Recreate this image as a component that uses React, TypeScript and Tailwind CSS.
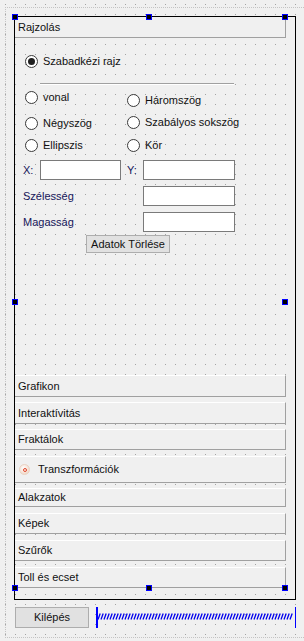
import React from "react";

function Radio({ label, checked }: { label: string; checked?: boolean }) {
  return (
    <div className="flex items-center gap-[5px] h-[13px]">
      <span className="w-[13px] h-[13px] rounded-full border border-[#3a3a3a] bg-white flex items-center justify-center shrink-0">
        {checked && <span className="w-[7px] h-[7px] rounded-full bg-[#1e1e1e]" />}
      </span>
      <span className="leading-[13px] whitespace-nowrap text-[#111]">{label}</span>
    </div>
  );
}

function Tab({ children, cls }: { children: React.ReactNode; cls: string }) {
  return (
    <div
      className={
        "flex items-center pl-[3px] bg-[#f0f0f0] border-t border-t-white border-b border-b-[#a0a0a0] border-r border-r-[#a0a0a0] text-[#111] " +
        cls
      }
    >
      {children}
    </div>
  );
}

function Handle({ cls }: { cls: string }) {
  return <div className={"absolute w-[6px] h-[6px] bg-black border border-[#0000ff] " + cls} />;
}

function Input({ cls }: { cls: string }) {
  return <div className={"h-[20px] bg-white border border-[#7a7a7a] " + cls} />;
}

function Spring() {
  let d = "";
  for (let x = 2; x < 197; x += 3) {
    d += `M${x} 12.5 L${x + 2.2} 6.5 `;
  }
  return (
    <svg width="200" height="21" viewBox="0 0 200 21" className="block">
      <rect x="0" y="0" width="2" height="21" fill="#0000ff" />
      <rect x="199" y="0" width="1.5" height="21" fill="#0000ff" />
      <path d={d} stroke="#0000ee" strokeWidth="1.3" fill="none" />
    </svg>
  );
}

export default function App() {
  return (
    <div
      className="w-[304px] h-[641px] overflow-hidden bg-[#f0f0f0] pt-[7px] pl-[5px] text-[11px] [font-family:'Liberation_Sans',Arial,sans-serif] [background-image:linear-gradient(#f0f0f0_9px,transparent_9px),linear-gradient(to_right,#f0f0f0_9px,#a3a3a3_9px)] [background-size:10px_10px] [background-position:6px_5px]"
    >
      <div className="h-[631px] border-l border-t border-b border-dotted border-[#c4c4c4] pl-[8px] pt-[8px]">
        {/* black frame */}
        <div className="relative w-[282px] h-[584px] border border-black">
          <div className="w-[271px] flex flex-col">
            {/* Rajzolás tab */}
            <div className="h-[21px] flex items-center pl-[3px] bg-[#f0f0f0] border-b border-b-[#a0a0a0] border-r border-r-[#a0a0a0] text-[#111]">
              Rajzolás
            </div>
            {/* page */}
            <div className="h-[337px] flex flex-col">
              <div className="mt-[17px] pl-[10px]">
                <Radio label="Szabadkézi rajz" checked />
              </div>
              <div className="mt-[15px] ml-[25px] w-[194px] border-t border-t-[#a0a0a0] border-b border-b-white" />
              <div className="flex pl-[10px]">
                <div className="w-[102px] flex flex-col">
                  <div className="mt-[6px]">
                    <Radio label="vonal" />
                  </div>
                  <div className="mt-[13px]">
                    <Radio label="Négyszög" />
                  </div>
                  <div className="mt-[9px]">
                    <Radio label="Ellipszis" />
                  </div>
                </div>
                <div className="flex flex-col">
                  <div className="mt-[9px]">
                    <Radio label="Háromszög" />
                  </div>
                  <div className="mt-[9px]">
                    <Radio label="Szabályos sokszög" />
                  </div>
                  <div className="mt-[10px]">
                    <Radio label="Kör" />
                  </div>
                </div>
              </div>
              <div className="mt-[8px] pl-[8px] flex items-center text-[#15155a]">
                <span className="w-[17px]">X:</span>
                <Input cls="w-[81px]" />
                <span className="ml-[6px] w-[16px]">Y:</span>
                <Input cls="w-[92px]" />
              </div>
              <div className="mt-[6px] pl-[8px] flex items-center text-[#15155a]">
                <span className="w-[120px]">Szélesség</span>
                <Input cls="w-[92px]" />
              </div>
              <div className="mt-[6px] pl-[8px] flex items-center text-[#15155a]">
                <span className="w-[120px]">Magasság</span>
                <Input cls="w-[92px]" />
              </div>
              <div className="mt-[3px] ml-[71px] w-[84px] h-[18px] bg-[#e1e1e1] border border-[#adadad] flex items-center justify-center text-[#111] leading-none">
                Adatok Törlése
              </div>
            </div>
            <Tab cls="h-[22px]">Grafikon</Tab>
            <Tab cls="h-[22px] mt-[5px]">Interaktívitás</Tab>
            <Tab cls="h-[21px] mt-[5px]">Fraktálok</Tab>
            <Tab cls="h-[27px] mt-[6px]">
              <span className="ml-[1px] w-[11px] h-[11px] rounded-full bg-[radial-gradient(circle_at_40%_35%,#ffffff,#f3dccd_70%,#e7c3ad)] border border-[#ead2c2] flex items-center justify-center">
                <span className="w-[4px] h-[4px] rounded-full border border-[#e0452a]" />
              </span>
              <span className="ml-[8px]">Transzformációk</span>
            </Tab>
            <Tab cls="h-[19px] mt-[5px]">Alakzatok</Tab>
            <Tab cls="h-[21px] mt-[6px]">Képek</Tab>
            <Tab cls="h-[21px] mt-[6px]">Szűrők</Tab>
            <Tab cls="h-[21px] mt-[6px]">Toll és ecset</Tab>
          </div>
          <Handle cls="left-[-3px] top-[-3px]" />
          <Handle cls="left-[131px] top-[-3px]" />
          <Handle cls="left-[267px] top-[-3px]" />
          <Handle cls="left-[-3px] top-[282px]" />
          <Handle cls="left-[267px] top-[282px]" />
          <Handle cls="left-[-3px] top-[568px]" />
          <Handle cls="left-[131px] top-[568px]" />
          <Handle cls="left-[267px] top-[568px]" />
        </div>
        {/* bottom row */}
        <div className="mt-[7px] ml-[1px] flex items-center h-[21px]">
          <div className="w-[74px] h-[21px] bg-[#e1e1e1] border border-[#adadad] flex items-center justify-center text-[#111]">
            Kilépés
          </div>
          <div className="ml-[7px]">
            <Spring />
          </div>
        </div>
      </div>
    </div>
  );
}
